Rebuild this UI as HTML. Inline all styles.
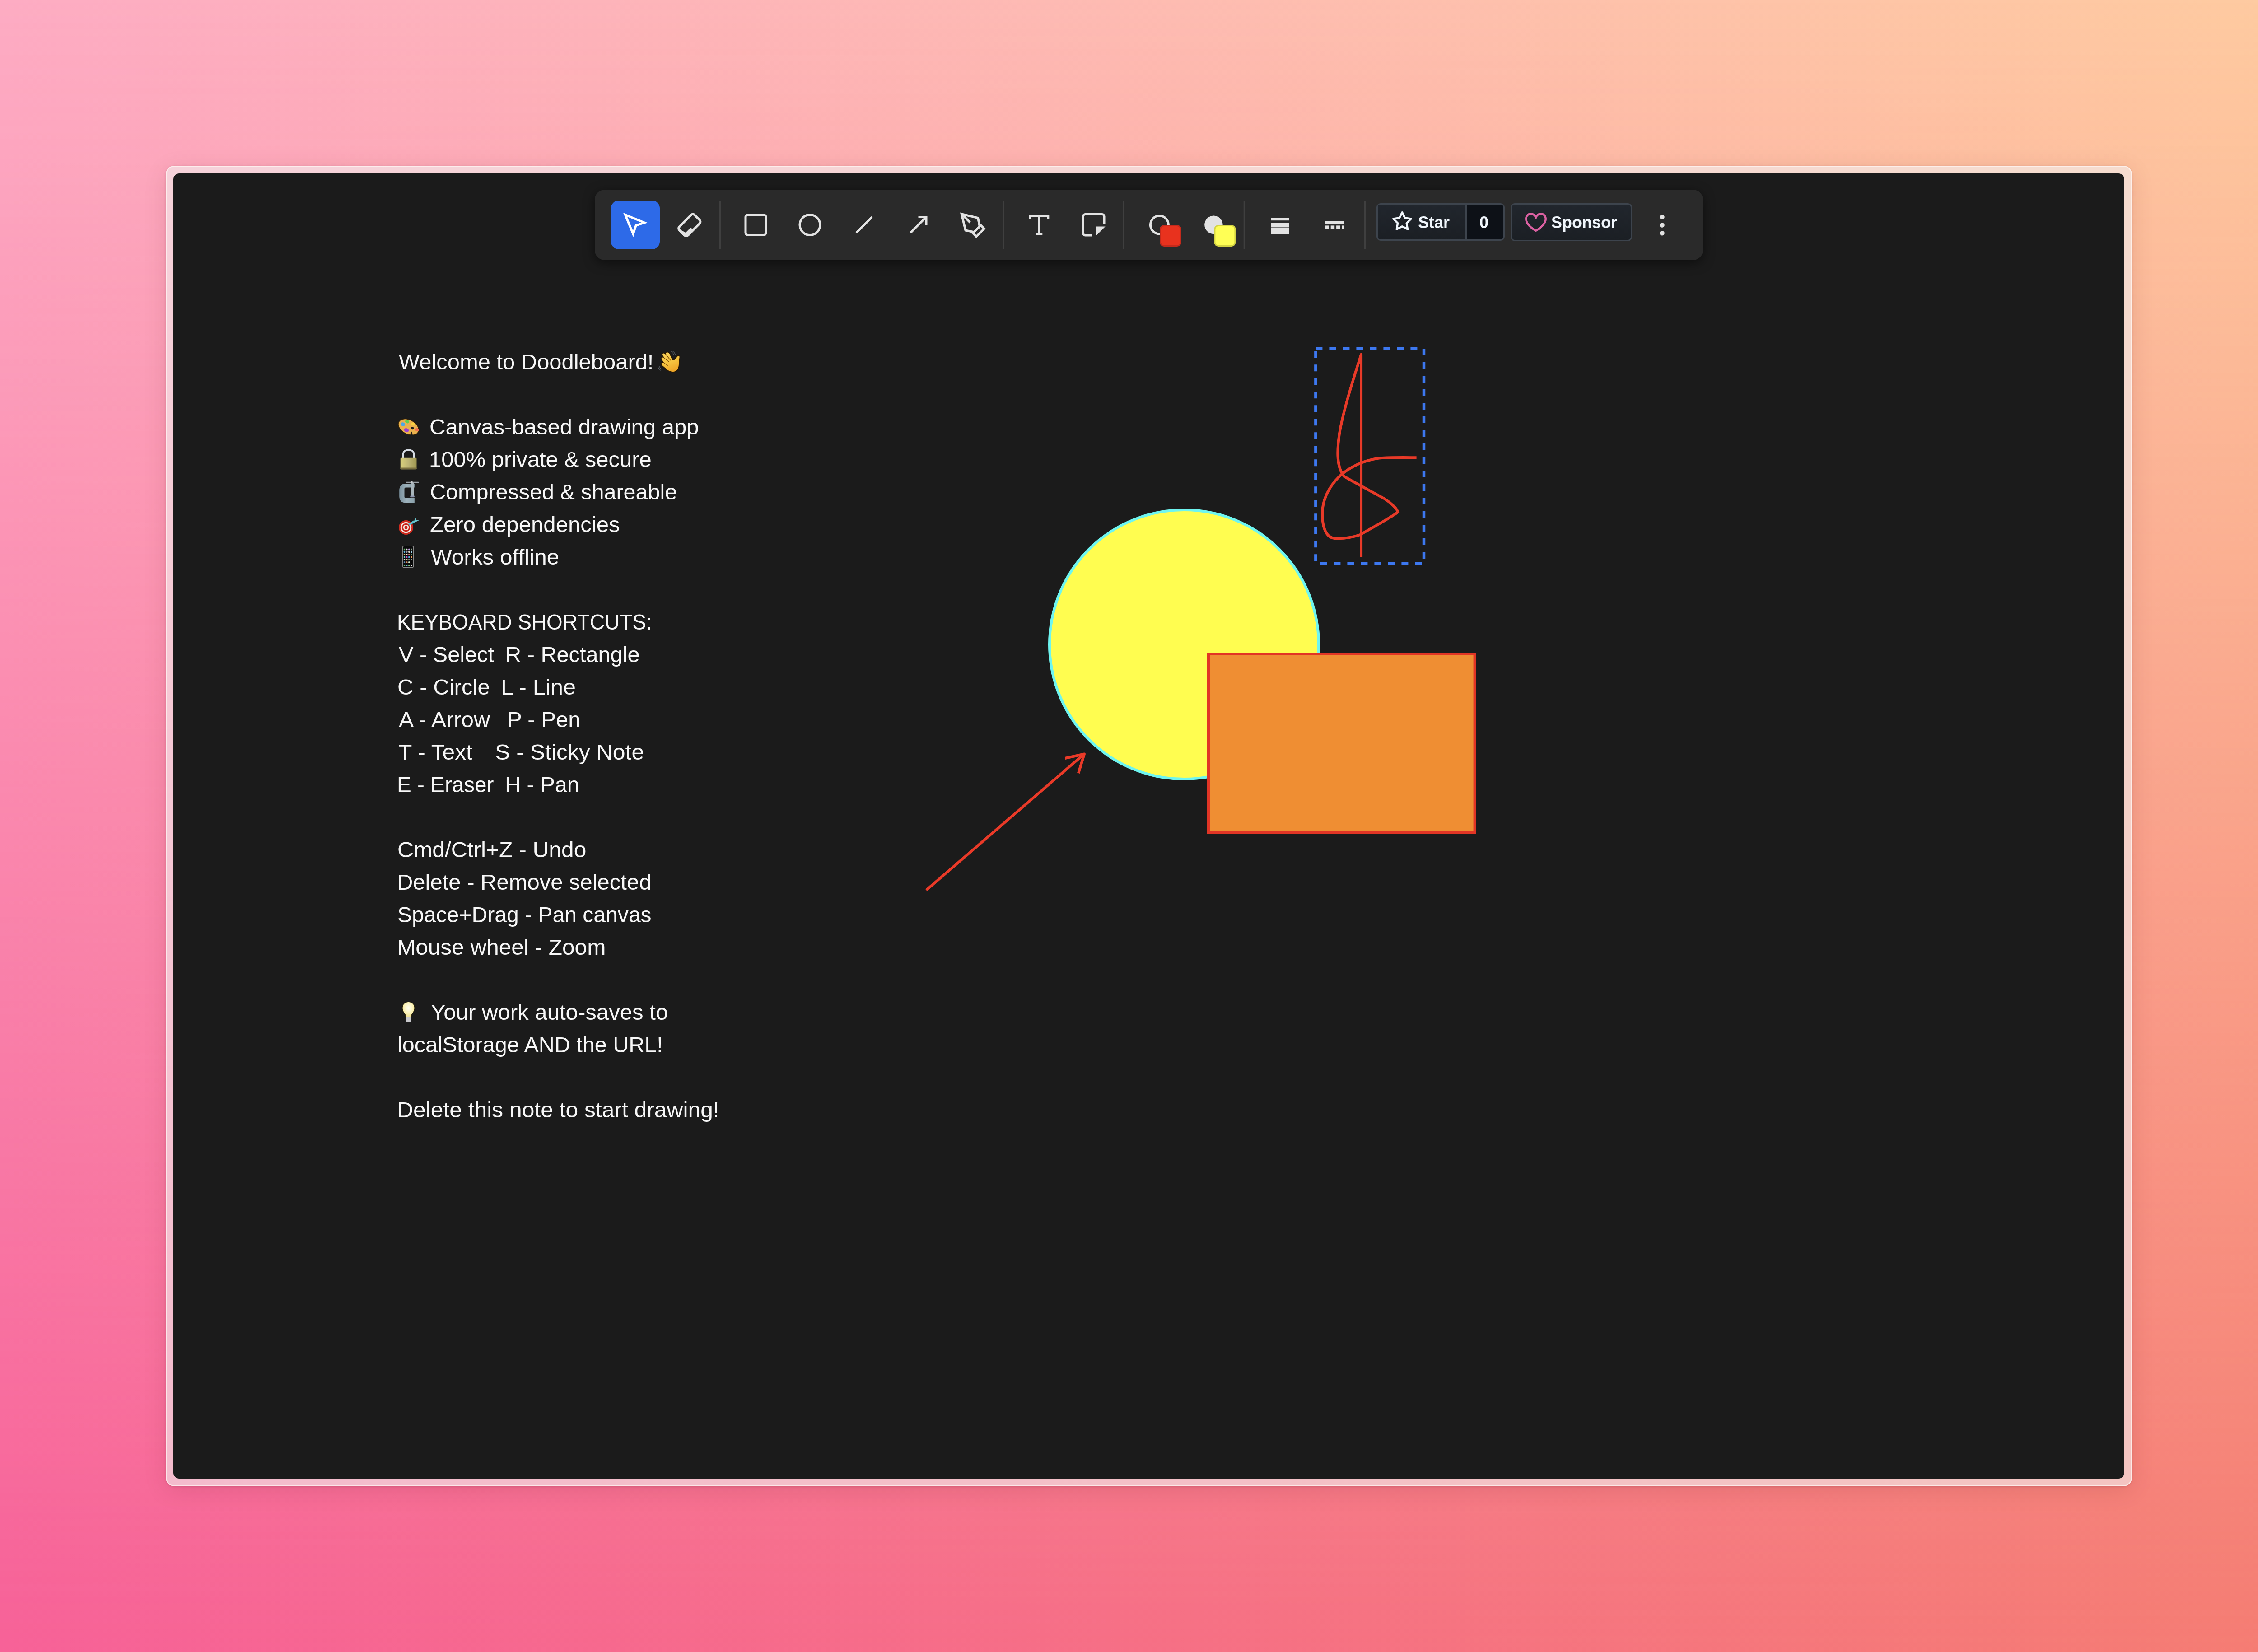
<!DOCTYPE html>
<html><head><meta charset="utf-8">
<style>
html,body{margin:0;padding:0;width:5088px;height:3658px;overflow:hidden;background:#F7A0A0}
body{position:relative;font-family:"Liberation Sans",sans-serif}
.abs{position:absolute}
#bgB{position:absolute;left:0;top:0;width:5088px;height:3658px;background:linear-gradient(to right,#F76298,#F57D73)}
#bgT{position:absolute;left:0;top:0;width:5088px;height:3658px;background:linear-gradient(to right,#FDACC3,#FECBA0);-webkit-mask-image:linear-gradient(to bottom,#000,rgba(0,0,0,0));mask-image:linear-gradient(to bottom,#000,rgba(0,0,0,0))}
#shadow{position:absolute;left:367px;top:367px;width:4354px;height:2924px;border-radius:19px;box-shadow:0 1px 4px rgba(100,20,40,0.16),0 10px 52px rgba(80,0,20,0.11)}
#frame{position:absolute;left:367px;top:367px;width:4354px;height:2924px;border-radius:19px;background:rgba(242,238,238,0.62);box-shadow:inset 0 0 0 2px rgba(255,246,244,0.72)}
#screen{position:absolute;left:384px;top:384px;width:4320px;height:2890px;border-radius:13px;background:#1B1B1B;overflow:hidden}
#toolbar{position:absolute;left:1317px;top:420px;width:2454px;height:156px;border-radius:22px;background:#2A2A2A;box-shadow:0 6px 24px rgba(0,0,0,0.5)}
#selbtn{position:absolute;left:1353px;top:444px;width:108px;height:108px;border-radius:17px;background:#2D6AE8}
.t{position:absolute;font-size:48px;line-height:48px;white-space:pre;color:#F7F7F7;transform-origin:0 0}
#star{position:absolute;left:3048px;top:450px;width:284px;height:83px;box-sizing:border-box;border:3px solid #3D444D;border-radius:9px;overflow:hidden;background:#0D1117}
#starL{position:absolute;left:0;top:0;width:193.5px;height:77px;background:linear-gradient(#21262D,#1B1F24);border-right:3px solid #3D444D}
#sponsor{position:absolute;left:3345px;top:450px;width:269px;height:84px;box-sizing:border-box;border:3px solid #3D444D;border-radius:9px;background:linear-gradient(#21262D,#1B1F24)}
.gh{position:absolute;font-size:36px;font-weight:bold;color:#F0F6FC;white-space:pre;line-height:36px;transform-origin:0 0;will-change:transform}
</style></head><body>
<div id="bgB"></div><div id="bgT"></div>
<div id="shadow"></div>
<div id="frame"></div>
<div id="screen"></div>
<div id="toolbar"></div>
<div id="selbtn"></div>
<div id="star"><div id="starL"></div></div>
<div id="sponsor"></div>
<div class="gh" style="left:3140px;top:475px">Star</div>
<div class="gh" style="left:3276px;top:475px">0</div>
<div class="gh" style="left:3435px;top:475px">Sponsor</div>
<svg class="abs" style="left:0;top:0" width="5088" height="3658" viewBox="0 0 5088 3658">
<g transform="translate(1377,468) scale(2.5)" fill="none" stroke="#FFFFFF" stroke-width="2" stroke-linecap="butt" stroke-linejoin="miter"><path d="M3 3 L20 10 L12.5 12.5 L10 20 Z"/></g>
<g transform="translate(1526.85,498.4) rotate(-45)"><rect x="-23.75" y="-13.45" width="47.5" height="26.9" rx="5.5" fill="none" stroke="#E2E2E2" stroke-width="5.2"/><path d="M-23.5 -13.45 L-17.7 5.6 L-2.2 5.6 L-1.1 13.45 L-23.5 13.45 Z" fill="#E2E2E2"/></g>
<g transform="translate(1643.5,468) scale(2.5)" fill="none" stroke="#E2E2E2" stroke-width="2" stroke-linecap="butt" stroke-linejoin="miter"><rect x="3" y="3" width="18" height="18" rx="2"/></g>
<g transform="translate(1763.5,468) scale(2.5)" fill="none" stroke="#E2E2E2" stroke-width="2" stroke-linecap="butt" stroke-linejoin="miter"><circle cx="12" cy="12" r="9"/></g>
<g transform="translate(1883.5,468) scale(2.5)" fill="none" stroke="#E2E2E2" stroke-width="2" stroke-linecap="butt" stroke-linejoin="miter"><path d="M5 19 L19 5"/></g>
<g transform="translate(2003.5,468) scale(2.5)" fill="none" stroke="#E2E2E2" stroke-width="2" stroke-linecap="butt" stroke-linejoin="miter"><path d="M5 19 L19 5 M12 5 H19 V12"/></g>
<g transform="translate(2124.3,468.8) scale(2.5)" fill="none" stroke="#E2E2E2" stroke-width="2" stroke-linecap="butt" stroke-linejoin="miter"><path d="M12 19l7-7 3 3-7 7-3-3z"/><path d="M18 13l-1.5-7.5L2 2l3.5 14.5L13 18l5-5z"/><path d="M2 2l7.586 7.586"/></g>
<g transform="translate(2270.8,468.1) scale(2.5)" fill="none" stroke="#E2E2E2" stroke-width="2" stroke-linecap="butt" stroke-linejoin="miter"><path d="M4 7V4h16v3M9 20h6M12 4v16"/></g>
<path d="M2445 495 V479 a4.5 4.5 0 0 0 -4.5 -4.5 H2403 a4.5 4.5 0 0 0 -4.5 4.5 V516.5 a4.5 4.5 0 0 0 4.5 4.5 H2418" fill="none" stroke="#E2E2E2" stroke-width="5"/><path d="M2427.8 501.4 L2447.6 501.4 L2427.8 521.3 Z" fill="#E2E2E2"/>
<circle cx="2567.4" cy="497.8" r="20" fill="none" stroke="#E2E2E2" stroke-width="5"/><rect x="2569.5" y="499.5" width="45" height="45" rx="8" fill="#E8321E" stroke="#C42A1C" stroke-width="3"/>
<circle cx="2687.4" cy="497.8" r="20.2" fill="#E2E2E2"/><rect x="2689.9" y="499.5" width="45" height="45" rx="8" fill="#FFFF55" stroke="#D4D442" stroke-width="3"/>
<rect x="2814.2" y="483" width="40.4" height="5.2" fill="#E2E2E2"/><rect x="2814.2" y="493" width="40.4" height="9.8" fill="#E2E2E2"/><rect x="2814.2" y="503.6" width="40.4" height="14.6" fill="#E2E2E2"/>
<rect x="2934.3" y="489.3" width="40.7" height="6.8" fill="#E2E2E2"/><rect x="2934.3" y="499.4" width="8.5" height="7.1" fill="#E2E2E2"/><rect x="2946.7" y="499.4" width="8.5" height="7.1" fill="#E2E2E2"/><rect x="2959.1" y="499.4" width="8.5" height="7.1" fill="#E2E2E2"/><rect x="2971.5" y="499.4" width="3.6" height="7.1" fill="#E2E2E2"/>
<circle cx="3680.5" cy="480.6" r="5.3" fill="#E2E2E2"/><circle cx="3680.5" cy="498.4" r="5.3" fill="#E2E2E2"/><circle cx="3680.5" cy="516.2" r="5.3" fill="#E2E2E2"/>
<rect x="1593.0" y="444" width="3" height="108" fill="#3F3F3F"/>
<rect x="2220.0" y="444" width="3" height="108" fill="#3F3F3F"/>
<rect x="2487.0" y="444" width="3" height="108" fill="#3F3F3F"/>
<rect x="2753.7" y="444" width="3" height="108" fill="#3F3F3F"/>
<rect x="3021.0" y="444" width="3" height="108" fill="#3F3F3F"/>
<g transform="translate(3081.3,467.3) scale(2.95)" fill="#F0F6FC"><path d="M8 .25a.75.75 0 0 1 .673.418l1.882 3.815 4.21.612a.75.75 0 0 1 .416 1.279l-3.046 2.97.719 4.192a.751.751 0 0 1-1.088.791L8 12.347l-3.766 1.98a.75.75 0 0 1-1.088-.79l.72-4.194L.818 6.374a.75.75 0 0 1 .416-1.28l4.21-.611L7.327.668A.75.75 0 0 1 8 .25Zm0 2.445L6.615 5.5a.75.75 0 0 1-.564.41l-3.097.45 2.24 2.184a.75.75 0 0 1 .216.664l-.528 3.084 2.769-1.456a.75.75 0 0 1 .698 0l2.77 1.456-.53-3.084a.75.75 0 0 1 .216-.664l2.24-2.183-3.096-.45a.75.75 0 0 1-.564-.41L8 2.694Z"/></g>
<g transform="translate(3377,468) scale(3)" fill="#DB61A2"><path d="m8 14.25.345.666a.75.75 0 0 1-.69 0l-.008-.004-.018-.01a7.152 7.152 0 0 1-.31-.17 22.055 22.055 0 0 1-3.434-2.414C2.045 10.731 0 8.35 0 5.5 0 2.836 2.086 1 4.25 1 5.797 1 7.153 1.802 8 3.02 8.847 1.802 10.203 1 11.75 1 13.914 1 16 2.836 16 5.5c0 2.85-2.045 5.231-3.885 6.818a22.066 22.066 0 0 1-3.744 2.584l-.018.01-.006.003h-.002ZM4.25 2.5c-1.336 0-2.75 1.164-2.75 3 0 2.15 1.58 4.144 3.365 5.682A20.58 20.58 0 0 0 8 13.393a20.58 20.58 0 0 0 3.135-2.211C12.92 9.644 14.5 7.65 14.5 5.5c0-1.836-1.414-3-2.75-3-1.373 0-2.609.986-3.029 2.456a.749.749 0 0 1-1.442 0C6.859 3.486 5.623 2.5 4.25 2.5Z"/></g>
<!-- wave hand -->
<g>
<defs><linearGradient id="handg" x1="0" y1="0" x2="0.4" y2="1"><stop offset="0" stop-color="#FBD560"/><stop offset="0.6" stop-color="#F6C440"/><stop offset="1" stop-color="#EFA82A"/></linearGradient></defs>
<path d="M1474 780.5 C1477 779 1481 779.5 1483 782.5 L1488.5 795.5 C1490 797.5 1492 797.5 1493.5 796 L1499.5 789 C1502 786 1506 787.5 1505.3 791.5 C1504.5 797 1504 804 1503.5 810 C1502.5 818 1498 823.5 1490.5 823.8 C1483 824 1477.5 820 1473 815.5 L1466 809.5 C1462.5 807 1463.5 802 1467.5 802.5 L1469.5 803 L1465.5 797.5 C1462 794 1464.5 789.5 1468.5 791 L1470 792 L1467 787.5 C1464.5 783.5 1468.5 780 1472 782.5 L1474 784 Z" fill="url(#handg)" stroke="#2A1800" stroke-width="1.6" stroke-linejoin="round"/>
<path d="M1470 792 L1481.5 801.5 M1469.5 803 L1478.5 809 M1474 784 L1484.5 797.5" stroke="#7A4A08" stroke-width="1.5" fill="none" stroke-linecap="round"/>
<path d="M1486 778.5 C1489 780.5 1491.5 783 1492.5 786.5 M1489.5 777.5 C1492.5 779.5 1494.5 782 1495.5 785" stroke="#5E646C" stroke-width="1.1" fill="none"/>
<path d="M1459.5 810 C1460.5 813.5 1463 816.5 1466 818.5 M1457 812 C1458 815.5 1460.5 818.5 1463.5 820.5" stroke="#5E646C" stroke-width="1.1" fill="none"/>
</g>
<!-- palette -->
<g>
<g transform="translate(904.5,945.5) rotate(28)"><ellipse cx="0" cy="0" rx="24" ry="15.5" fill="#E9B14E" stroke="#3A2400" stroke-width="1.2"/></g>

<ellipse cx="892" cy="939.5" rx="5" ry="4" fill="#4AA8E8" transform="rotate(25 892 939.5)"/>
<ellipse cx="901.5" cy="933.5" rx="4.5" ry="3.5" fill="#5FD050" transform="rotate(25 901.5 933.5)"/>
<ellipse cx="914.5" cy="939" rx="4" ry="3.2" fill="#F8D040" transform="rotate(25 914.5 939)"/>
<ellipse cx="900" cy="952.5" rx="5.5" ry="4.2" fill="#9A40D0" transform="rotate(25 900 952.5)"/>
<ellipse cx="923.5" cy="951.5" rx="4" ry="3.5" fill="#F07050" transform="rotate(25 923.5 951.5)"/>
<circle cx="913.2" cy="948.3" r="3" fill="#1B1B1B"/><path d="M907.5 968 L909.3 957 Q911 954.6 912.7 957 L914.5 968 Z" fill="#1B1B1B"/>
</g>
<!-- lock -->
<g>
<path d="M892.5 1014 V1006 C892.5 999.5 898 996.2 904.6 996.2 C911.2 996.2 916.7 999.5 916.7 1006 V1014" fill="none" stroke="#D6DCE4" stroke-width="3.6"/>
<defs><linearGradient id="lockg" x1="0" x2="1" y1="0" y2="0"><stop offset="0" stop-color="#D8D07C"/><stop offset="0.5" stop-color="#BDB575"/><stop offset="1" stop-color="#9E9650"/></linearGradient></defs>
<rect x="886.7" y="1013.8" width="35.8" height="25.5" rx="2" fill="url(#lockg)"/>
<rect x="886.7" y="1035.5" width="35.8" height="3.8" rx="1.5" fill="#7A7040"/>
</g>
<!-- clamp -->
<g>
<defs><linearGradient id="clampg" x1="0" y1="0" x2="1" y2="0"><stop offset="0" stop-color="#7A909C"/><stop offset="0.5" stop-color="#9DB2BC"/><stop offset="1" stop-color="#8AA0AA"/></linearGradient></defs>
<path d="M917.8 1071.1 H897 C889 1071.1 884.2 1077 884.2 1086 V1099 C884.2 1108 889 1113.3 897 1113.3 H917.8 V1103 H898.5 C896.5 1103 895.5 1102 895.5 1100 V1082.4 C895.5 1080.4 896.5 1079.4 898.5 1079.4 H917.8 Z" fill="url(#clampg)"/>
<rect x="910.7" y="1069.5" width="5.4" height="29.5" fill="#A9B6BC"/>
<rect x="898.4" y="1066.7" width="29.5" height="3" rx="1.5" fill="#9CA2A8"/>
<circle cx="911.7" cy="1067.8" r="2.2" fill="#C8CCD0"/>
<rect x="908.3" y="1097.6" width="9.5" height="3.6" rx="1" fill="#9098B0"/>
</g>
<!-- dart -->
<g>
<circle cx="899" cy="1168" r="16" fill="#D02A1E"/>
<circle cx="899" cy="1168" r="12.2" fill="#F4E2DA"/>
<circle cx="899" cy="1168" r="9.2" fill="#C8281E"/>
<circle cx="899" cy="1168" r="6.2" fill="#F4E2DA"/>
<circle cx="899" cy="1168" r="3.4" fill="#C8281E"/>
<path d="M905 1162 L918 1154" stroke="#5EC0CC" stroke-width="4.5"/>
<path d="M917 1156 L919 1144 L922 1151 L928 1152 L920 1156 Z" fill="#6CC8D0"/>
</g>
<!-- phone -->
<g>
<rect x="891.8" y="1209.2" width="23.6" height="47.3" rx="2.5" fill="#0A0A0A" stroke="#8A8A8A" stroke-width="1.5"/>
</g>
<g><rect x="893.8" y="1214.8" width="3.4" height="3.4" rx="0.8" fill="#6AC46A"/><rect x="899.0" y="1214.8" width="3.4" height="3.4" rx="0.8" fill="#F0F0F0"/><rect x="904.1999999999999" y="1214.8" width="3.4" height="3.4" rx="0.8" fill="#C8A0E8"/><rect x="909.4" y="1214.8" width="3.4" height="3.4" rx="0.8" fill="#90A890"/><rect x="893.8" y="1220.5" width="3.4" height="3.4" rx="0.8" fill="#60B8E0"/><rect x="899.0" y="1220.5" width="3.4" height="3.4" rx="0.8" fill="#9890A0"/><rect x="904.1999999999999" y="1220.5" width="3.4" height="3.4" rx="0.8" fill="#D8D8C8"/><rect x="909.4" y="1220.5" width="3.4" height="3.4" rx="0.8" fill="#A8D8F0"/><rect x="893.8" y="1226.2" width="3.4" height="3.4" rx="0.8" fill="#E8C870"/><rect x="899.0" y="1226.2" width="3.4" height="3.4" rx="0.8" fill="#F8F8F0"/><rect x="904.1999999999999" y="1226.2" width="3.4" height="3.4" rx="0.8" fill="#E07070"/><rect x="909.4" y="1226.2" width="3.4" height="3.4" rx="0.8" fill="#70A070"/><rect x="893.8" y="1231.8999999999999" width="3.4" height="3.4" rx="0.8" fill="#70D0D0"/><rect x="899.0" y="1231.8999999999999" width="3.4" height="3.4" rx="0.8" fill="#D050C0"/><rect x="904.1999999999999" y="1231.8999999999999" width="3.4" height="3.4" rx="0.8" fill="#50B0E8"/><rect x="909.4" y="1231.8999999999999" width="3.4" height="3.4" rx="0.8" fill="#F0A060"/><rect x="893.8" y="1237.6" width="3.4" height="3.4" rx="0.8" fill="#E8E8E8"/><rect x="899.0" y="1237.6" width="3.4" height="3.4" rx="0.8" fill="#E8D890"/><rect x="904.1999999999999" y="1237.6" width="3.4" height="3.4" rx="0.8" fill="#888888"/><rect x="909.4" y="1237.6" width="3.4" height="3.4" rx="0.8" fill="#A0A8A0"/><rect x="893.8" y="1243.3" width="3.4" height="3.4" rx="0.8" fill="#6090C0"/><rect x="899.0" y="1243.3" width="3.4" height="3.4" rx="0.8" fill="#E09060"/><rect x="904.1999999999999" y="1243.3" width="3.4" height="3.4" rx="0.8" fill="#D0F0D0"/><rect x="893.8" y="1250.6" width="3.4" height="3.4" rx="0.8" fill="#70C870"/><rect x="899.0" y="1250.6" width="3.4" height="3.4" rx="0.8" fill="#70B8E8"/><rect x="904.1999999999999" y="1250.6" width="3.4" height="3.4" rx="0.8" fill="#80D080"/><rect x="909.4" y="1250.6" width="3.4" height="3.4" rx="0.8" fill="#F8F8F8"/></g>
<!-- bulb -->
<g>
<defs><radialGradient id="bulbg" cx="0.5" cy="0.4" r="0.6"><stop offset="0" stop-color="#FFFFF4"/><stop offset="0.6" stop-color="#FBF2B8"/><stop offset="1" stop-color="#EFE090"/></radialGradient></defs>
<path d="M904.5 2218.5 C912.5 2218.5 918 2224.5 918 2232 C918 2238.5 914 2242 911.8 2246 C911 2248 910.8 2250 910.8 2252 H898.2 C898.2 2250 898 2248 897.2 2246 C895 2242 891 2238.5 891 2232 C891 2224.5 896.5 2218.5 904.5 2218.5 Z" fill="url(#bulbg)" stroke="#2A2200" stroke-width="1"/>
<path d="M898.5 2252 H910.5 V2259 C910.5 2262 908 2263.7 904.5 2263.7 C901 2263.7 898.5 2262 898.5 2259 Z" fill="#C8C8CC"/>
</g>

<!-- canvas shapes -->
<circle cx="2622" cy="1427" r="298" fill="#FFFD50" stroke="#6EF5F0" stroke-width="6"/>
<rect x="2676" y="1448" width="589.6" height="396" fill="#EF8E33" stroke="#E23525" stroke-width="6"/>
<path d="M2051 1971 L2399 1671" fill="none" stroke="#EA3A28" stroke-width="6" stroke-linecap="butt"/><path d="M2358.3 1679 L2401 1669.5 L2388 1712" fill="none" stroke="#EA3A28" stroke-width="6" stroke-linecap="butt" stroke-linejoin="round"/>
<path d="M2913.4 771.5 H3153 V1247.3 H2913.4 Z" fill="none" stroke="#3D78F0" stroke-width="6.5" stroke-dasharray="15 15"/>
<path d="M3014.1 1233.4 L3014.1 784.7 C3000 830 2975 905 2966 960 C2960 1000 2960 1035 2976 1054.6 C2995 1066 3040 1090 3065.4 1104.2 C3080 1113 3095 1128 3095.2 1134 C3085 1143 3050 1162 3012.5 1183.7 C2995 1190 2975 1193 2955 1192 C2935 1190 2928 1165 2928 1137.4 C2928 1110 2940 1080 2966.1 1054.6 C2985 1037 3020 1017 3060 1014 C3090 1012.5 3120 1013.2 3136.6 1013.2" fill="none" stroke="#E83A28" stroke-width="6" stroke-linecap="butt" stroke-linejoin="round"/>
</svg>
<div class="t" id="t0" style="left:883.0px;top:778.4px;transform:scaleX(1.0187)">Welcome to Doodleboard!</div>
<div class="t" id="t1" style="left:950.9px;top:922.4px;transform:scaleX(1.0207)">Canvas-based drawing app</div>
<div class="t" id="t2" style="left:949.9px;top:994.4px;transform:scaleX(1.0202)">100% private &amp; secure</div>
<div class="t" id="t3" style="left:952.0px;top:1066.4px;transform:scaleX(1.0104)">Compressed &amp; shareable</div>
<div class="t" id="t4" style="left:952.0px;top:1138.4px;transform:scaleX(1.0236)">Zero dependencies</div>
<div class="t" id="t5" style="left:954.0px;top:1210.4px;transform:scaleX(1.0309)">Works offline</div>
<div class="t" id="t6" style="left:879.2px;top:1354.4px;transform:scaleX(0.9548)">KEYBOARD SHORTCUTS:</div>
<div class="t" id="t7" style="left:883.0px;top:1426.4px;transform:scaleX(1.0137)">V - Select</div>
<div class="t" id="t8" style="left:1119.1px;top:1426.4px;transform:scaleX(1.0140)">R - Rectangle</div>
<div class="t" id="t9" style="left:879.9px;top:1498.4px;transform:scaleX(1.0238)">C - Circle</div>
<div class="t" id="t10" style="left:1109.2px;top:1498.4px;transform:scaleX(1.0487)">L - Line</div>
<div class="t" id="t11" style="left:883.0px;top:1570.4px;transform:scaleX(1.0374)">A - Arrow</div>
<div class="t" id="t12" style="left:1122.9px;top:1570.4px;transform:scaleX(1.0197)">P - Pen</div>
<div class="t" id="t13" style="left:882.0px;top:1642.4px;transform:scaleX(1.0356)">T - Text</div>
<div class="t" id="t14" style="left:1096.0px;top:1642.4px;transform:scaleX(1.0403)">S - Sticky Note</div>
<div class="t" id="t15" style="left:879.0px;top:1714.4px;transform:scaleX(0.9924)">E - Eraser</div>
<div class="t" id="t16" style="left:1117.7px;top:1714.4px;transform:scaleX(1.0130)">H - Pan</div>
<div class="t" id="t17" style="left:879.9px;top:1858.4px;transform:scaleX(1.0351)">Cmd/Ctrl+Z - Undo</div>
<div class="t" id="t18" style="left:878.9px;top:1930.4px;transform:scaleX(1.0202)">Delete - Remove selected</div>
<div class="t" id="t19" style="left:880.0px;top:2002.4px;transform:scaleX(1.0018)">Space+Drag - Pan canvas</div>
<div class="t" id="t20" style="left:878.9px;top:2074.4px;transform:scaleX(1.0317)">Mouse wheel - Zoom</div>
<div class="t" id="t21" style="left:954.0px;top:2218.4px;transform:scaleX(1.0236)">Your work auto-saves to</div>
<div class="t" id="t22" style="left:880.0px;top:2290.4px;transform:scaleX(1.0105)">localStorage AND the URL!</div>
<div class="t" id="t23" style="left:878.9px;top:2434.4px;transform:scaleX(1.0368)">Delete this note to start drawing!</div>
</body></html>
